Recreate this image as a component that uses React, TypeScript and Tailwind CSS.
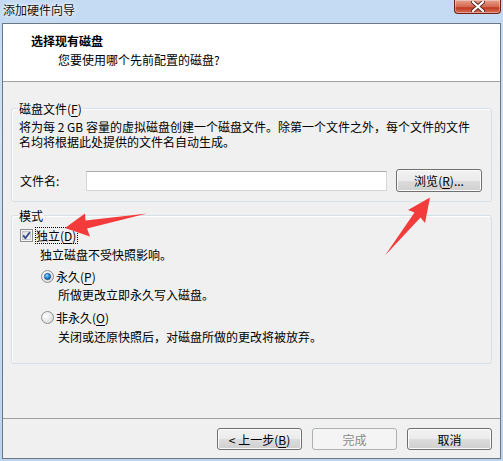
import React from "react";

const font = "font-['Noto_Sans_CJK_SC',_'Noto_Sans',_sans-serif]";

const Key = ({ k }: { k: string }) => (
  <>
    (<u className="underline underline-offset-[2px]">{k}</u>)
  </>
);

const WinButton = ({ children, disabled = false, h = "h-[22px]", w = "w-[85px]" }: { children: React.ReactNode; disabled?: boolean; h?: string; w?: string }) => (
  <button
    className={
      disabled
        ? `${w} ${h} rounded-[3px] border border-[#adb2b5] bg-[#f4f4f4] text-[12px] leading-[15px] text-[#8a8a8a]`
        : `${w} ${h} rounded-[3px] border border-[#707070] bg-[linear-gradient(#f2f2f2_0%,#ebebeb_50%,#dddddd_50%,#cfcfcf_100%)] shadow-[inset_0_0_0_1px_#fbfbfb] text-[12px] leading-[15px] text-black`
    }
  >
    {children}
  </button>
);

const Radio = ({ checked }: { checked: boolean }) => (
  <svg width="13" height="13" viewBox="0 0 13 13">
    <defs>
      <radialGradient id="rbg" cx="0.35" cy="0.35" r="0.8">
        <stop offset="0" stopColor="#ffffff" />
        <stop offset="1" stopColor="#d4d4d4" />
      </radialGradient>
      <radialGradient id="rdot" cx="0.4" cy="0.35" r="0.7">
        <stop offset="0" stopColor="#9fe0ff" />
        <stop offset="0.5" stopColor="#2a8ad4" />
        <stop offset="1" stopColor="#0c4f90" />
      </radialGradient>
    </defs>
    <circle cx="6.5" cy="6.5" r="6" fill="url(#rbg)" stroke="#8e8f8f" strokeWidth="1" />
    {checked && <circle cx="6.5" cy="6.5" r="3.2" fill="url(#rdot)" stroke="#1d4f85" strokeWidth="0.6" />}
  </svg>
);

export default function App() {
  return (
    <div className={`${font} relative w-[503px] h-[461px] flex flex-col px-[2px] pb-[2px] bg-[linear-gradient(180deg,#c3daf2_0%,#cfe2f6_30%,#bcd4ee_100%)] text-[12px] leading-[15px] text-black overflow-hidden`}>
      {/* title bar */}
      <div className="h-[23px] flex justify-between items-start">
        <span className="mt-[2px] ml-[1px] leading-[16px] [text-shadow:0_0_6px_#ffffff,0_0_3px_#ffffff] text-[#111]">添加硬件向导</span>
        <div className="w-[47px] h-[14px] rounded-b-[4px] border border-t-0 border-[#6e2218] bg-[linear-gradient(#e8a08f_0%,#d46a52_50%,#c0391f_60%,#d8705a_100%)] shadow-[inset_0_0_0_1px_rgba(255,255,255,0.35)] flex items-center justify-center">
          <svg width="14" height="11" viewBox="0 0 14 11">
            <path d="M2 1 L12 10 M12 1 L2 10" stroke="#5a2a22" strokeWidth="4" strokeLinecap="round" />
            <path d="M2 1 L12 10 M12 1 L2 10" stroke="#ffffff" strokeWidth="2.2" strokeLinecap="round" />
          </svg>
        </div>
      </div>

      {/* panel */}
      <div className="flex-1 flex flex-col border border-[#6c7785] bg-[#f0f0f0]">
        {/* header */}
        <div className="h-[58px] shrink-0 bg-white border-b border-[#a0a0a0] pt-[9px] pl-[28px]">
          <div className="font-bold">选择现有磁盘</div>
          <div className="mt-[4px] pl-[27px]">您要使用哪个先前配置的磁盘?</div>
        </div>

        {/* body */}
        <div className="flex-1 px-[8px]">
          <fieldset className="mt-[19px] rounded-[3px] border border-[#d5dfe5] shadow-[inset_1px_1px_0_#ffffff] pl-[7px] pr-[7px] pb-[9px]">
            <legend className="-ml-[1px] px-[1px]">磁盘文件<Key k="F" /></legend>
            <div className="pt-[3px] whitespace-nowrap">
              <div>将为每 2 GB 容量的虚拟磁盘创建一个磁盘文件。除第一个文件之外，每个文件的文件</div>
              <div>名均将根据此处提供的文件名自动生成。</div>
            </div>
            <div className="mt-[20px] h-[23px] flex items-center">
              <span className="ml-[1px] w-[66px]">文件名:</span>
              <div className="w-[301px] h-[20px] border border-[#d3d6db] border-t-[#abadb3] bg-white" />
              <div className="ml-[9px]">
                <WinButton h="h-[23px]" w="w-[86px]">浏览<Key k="R" />...</WinButton>
              </div>
            </div>
          </fieldset>

          <fieldset className="mt-[6px] rounded-[3px] border border-[#d5dfe5] shadow-[inset_1px_1px_0_#ffffff] pl-[7px] pr-[7px] pb-[18px]">
            <legend className="-ml-[1px] px-[1px]">模式</legend>
            <div className="pt-[3px]">
              <div className="h-[18px] flex items-center">
                <svg width="13" height="13" viewBox="0 0 13 13" className="ml-[1px]">
                  <defs>
                    <linearGradient id="cbg" x1="0" y1="0" x2="1" y2="1">
                      <stop offset="0" stopColor="#dcdcdc" />
                      <stop offset="1" stopColor="#fafafa" />
                    </linearGradient>
                  </defs>
                  <rect x="0.5" y="0.5" width="12" height="12" fill="#f4f4f4" stroke="#8e8f8f" />
                  <rect x="2.5" y="2.5" width="8" height="8" fill="url(#cbg)" stroke="#b8bcc2" strokeWidth="0.8" />
                  <path d="M3.2 6.4 L5.4 9.2 L9.8 3.2" fill="none" stroke="#34498a" strokeWidth="1.8" strokeLinejoin="round" />
                </svg>
                <span className="ml-[2px] pr-[1px] border border-dotted border-black leading-[15px]">独立<Key k="D" /></span>
              </div>
              <div className="mt-[1px] h-[18px] flex items-center pl-[21px]">独立磁盘不受快照影响。</div>
              <div className="mt-[4px] h-[18px] flex items-center pl-[22px]">
                <Radio checked />
                <span className="ml-[2px]">永久<Key k="P" /></span>
              </div>
              <div className="h-[18px] flex items-center pl-[39px]">所做更改立即永久写入磁盘。</div>
              <div className="mt-[5px] h-[18px] flex items-center pl-[22px]">
                <Radio checked={false} />
                <span className="ml-[2px]">非永久<Key k="O" /></span>
              </div>
              <div className="mt-[1px] h-[18px] flex items-center pl-[39px]">关闭或还原快照后，对磁盘所做的更改将被放弃。</div>
            </div>
          </fieldset>
        </div>

        {/* footer */}
        <div className="h-[40px] shrink-0 border-t border-[#a0a0a0] pt-[9px] pr-[8px] flex justify-end items-start gap-[10px]">
          <WinButton>&lt; 上一步<Key k="B" /></WinButton>
          <WinButton disabled>完成</WinButton>
          <WinButton>取消</WinButton>
        </div>
      </div>

      {/* red annotation arrows */}
      <svg className="absolute inset-0 pointer-events-none" width="503" height="461" viewBox="0 0 503 461">
        <polygon points="65,228 85,213.5 85.5,220.5 147,213.5 87,228.5 90,236.5" fill="#f33b3b" />
        <polygon points="430,197.5 425,223 420.5,217.5 385,255.5 414.5,212.5 408,210" fill="#f33b3b" />
      </svg>
    </div>
  );
}
